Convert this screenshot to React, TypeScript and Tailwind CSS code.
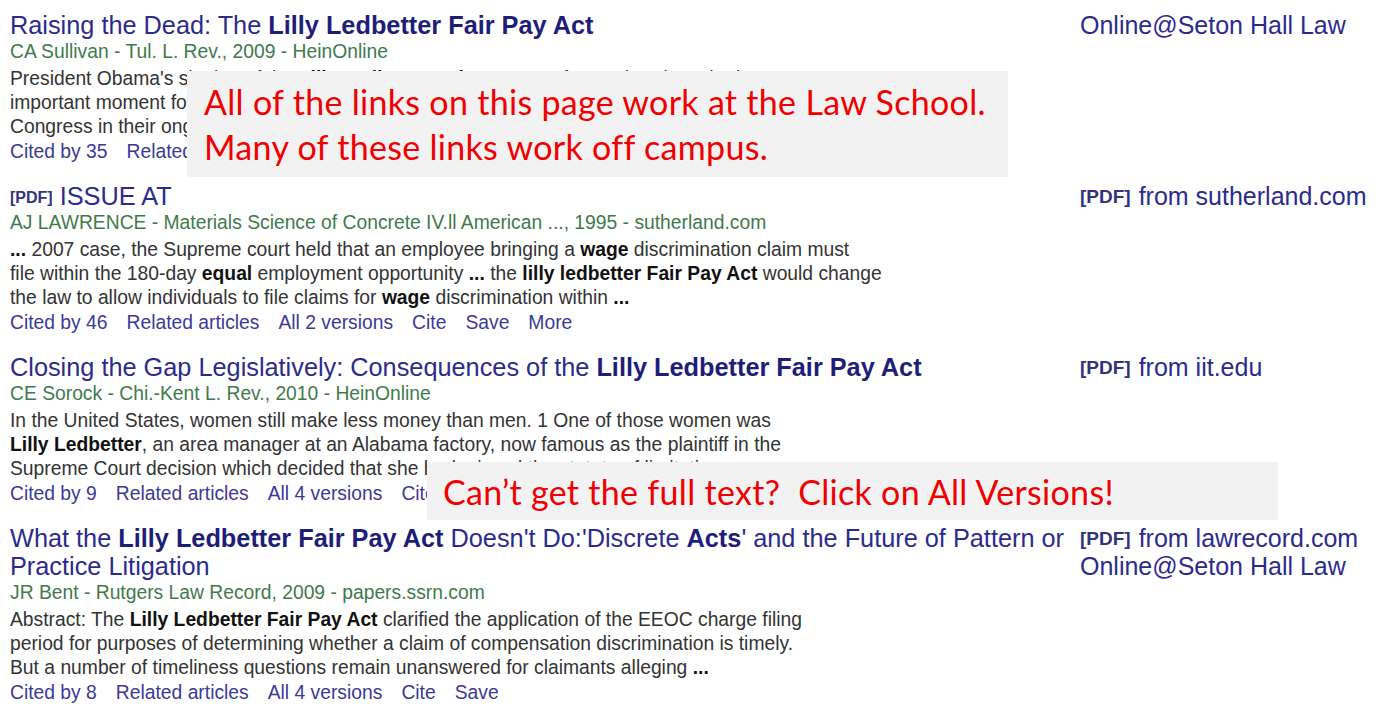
import React from 'react';

type Seg = { t: string; b?: boolean };

interface Result {
  pdf?: boolean;
  title: Seg[];
  meta: string;
  snippet: Seg[][];
  links: string[];
  side: { pdf?: boolean; text: string }[];
}

const results: Result[] = [
  {
    title: [{ t: 'Raising the Dead: The ' }, { t: 'Lilly Ledbetter Fair Pay Act', b: true }],
    meta: 'CA Sullivan - Tul. L. Rev., 2009 - HeinOnline',
    snippet: [
      [{ t: "President Obama's signing of the " }, { t: 'Lilly Ledbetter Fair Pay Act', b: true }, { t: ' of 2009 (FPA) marked an' }],
      [{ t: 'important moment for the law of employment discrimination, and it signals the role of' }],
      [{ t: 'Congress in their ongoing dialogue with the Supreme Court over the meaning of Title VII' }],
    ],
    links: ['Cited by 35', 'Related articles', 'All 5 versions', 'Cite', 'Save'],
    side: [{ text: 'Online@Seton Hall Law' }],
  },
  {
    pdf: true,
    title: [{ t: 'ISSUE AT' }],
    meta: 'AJ LAWRENCE - Materials Science of Concrete IV.ll American ..., 1995 - sutherland.com',
    snippet: [
      [{ t: '...', b: true }, { t: ' 2007 case, the Supreme court held that an employee bringing a ' }, { t: 'wage', b: true }, { t: ' discrimination claim must' }],
      [{ t: 'file within the 180-day ' }, { t: 'equal', b: true }, { t: ' employment opportunity ' }, { t: '...', b: true }, { t: ' the ' }, { t: 'lilly ledbetter Fair Pay Act', b: true }, { t: ' would change' }],
      [{ t: 'the law to allow individuals to file claims for ' }, { t: 'wage', b: true }, { t: ' discrimination within ' }, { t: '...', b: true }],
    ],
    links: ['Cited by 46', 'Related articles', 'All 2 versions', 'Cite', 'Save', 'More'],
    side: [{ pdf: true, text: 'from sutherland.com' }],
  },
  {
    title: [{ t: 'Closing the Gap Legislatively: Consequences of the ' }, { t: 'Lilly Ledbetter Fair Pay Act', b: true }],
    meta: 'CE Sorock - Chi.-Kent L. Rev., 2010 - HeinOnline',
    snippet: [
      [{ t: 'In the United States, women still make less money than men. 1 One of those women was' }],
      [{ t: 'Lilly Ledbetter', b: true }, { t: ', an area manager at an Alabama factory, now famous as the plaintiff in the' }],
      [{ t: 'Supreme Court decision which decided that she had missed the statute of limitations' }],
    ],
    links: ['Cited by 9', 'Related articles', 'All 4 versions', 'Cite', 'Save'],
    side: [{ pdf: true, text: 'from iit.edu' }],
  },
  {
    title: [
      { t: 'What the ' },
      { t: 'Lilly Ledbetter Fair Pay Act', b: true },
      { t: " Doesn't Do:'Discrete " },
      { t: 'Acts', b: true },
      { t: "' and the Future of Pattern or Practice Litigation" },
    ],
    meta: 'JR Bent - Rutgers Law Record, 2009 - papers.ssrn.com',
    snippet: [
      [{ t: 'Abstract: The ' }, { t: 'Lilly Ledbetter Fair Pay Act', b: true }, { t: ' clarified the application of the EEOC charge filing' }],
      [{ t: 'period for purposes of determining whether a claim of compensation discrimination is timely.' }],
      [{ t: 'But a number of timeliness questions remain unanswered for claimants alleging ' }, { t: '...', b: true }],
    ],
    links: ['Cited by 8', 'Related articles', 'All 4 versions', 'Cite', 'Save'],
    side: [{ pdf: true, text: 'from lawrecord.com' }, { text: 'Online@Seton Hall Law' }],
  },
];

const ResultRow = ({ r }: { r: Result }) => (
  <div className="flex">
    <div className="w-[1070px] shrink-0">
      <h3 className="w-[1060px] text-[25.3px] leading-[28px] text-[#2b2b8c]">
        {r.pdf && <span className="mr-[7px] align-[2px] text-[16px] leading-none font-bold text-[#33337a]">[PDF]</span>}
        {r.title.map((s, i) => (
          <span key={i} className={s.b ? 'font-bold text-[#1e1e78]' : ''}>
            {s.t}
          </span>
        ))}
      </h3>
      <div className="mt-[1px] text-[19.3px] leading-[24px] text-[#3f7a4c]">{r.meta}</div>
      <div className="mt-[3px] text-[19.3px] leading-[24px] text-[#333]">
        {r.snippet.map((line, i) => (
          <div key={i} className="whitespace-nowrap">
            {line.map((s, j) => (
              <span key={j} className={s.b ? 'font-bold text-[#111]' : ''}>
                {s.t}
              </span>
            ))}
          </div>
        ))}
      </div>
      <div className="flex gap-[19px] text-[19.3px] leading-[26px] text-[#3a3a96]">
        {r.links.map((l) => (
          <span key={l}>{l}</span>
        ))}
      </div>
    </div>
    <div className="text-[25px] leading-[28px] text-[#2b2b8c]">
      {r.side.map((s, i) => (
        <div key={i} className="whitespace-nowrap">
          {s.pdf && <span className="mr-[8px] align-[2px] text-[19px] leading-none font-bold text-[#33337a]">[PDF]</span>}
          {s.text}
        </div>
      ))}
    </div>
  </div>
);

export default function App() {
  return (
    <div className="relative h-[709px] w-[1386px] overflow-hidden bg-white font-['Liberation_Sans',Arial,sans-serif]">
      <div className="flex flex-col gap-[17px] pl-[10px] pt-[11px]">
        {results.map((r, i) => (
          <ResultRow key={i} r={r} />
        ))}
      </div>

      <div className="absolute left-[187px] top-[71px] flex h-[106px] w-[821px] flex-col justify-center bg-[#f2f2f2] pl-[17px] font-['Lato',sans-serif] text-[34px] leading-[45px] tracking-[0.3px] text-[#f00000]">
        <div>All of the links on this page work at the Law School.</div>
        <div>Many of these links work off campus.</div>
      </div>

      <div className="absolute left-[427px] top-[462px] flex h-[58px] w-[851px] items-center bg-[#f2f2f2] pl-[16px] font-['Lato',sans-serif] text-[34px] tracking-[0.3px] text-[#f00000]">
        <span className="whitespace-pre">Can’t get the full text?  Click on All Versions!</span>
      </div>
    </div>
  );
}
